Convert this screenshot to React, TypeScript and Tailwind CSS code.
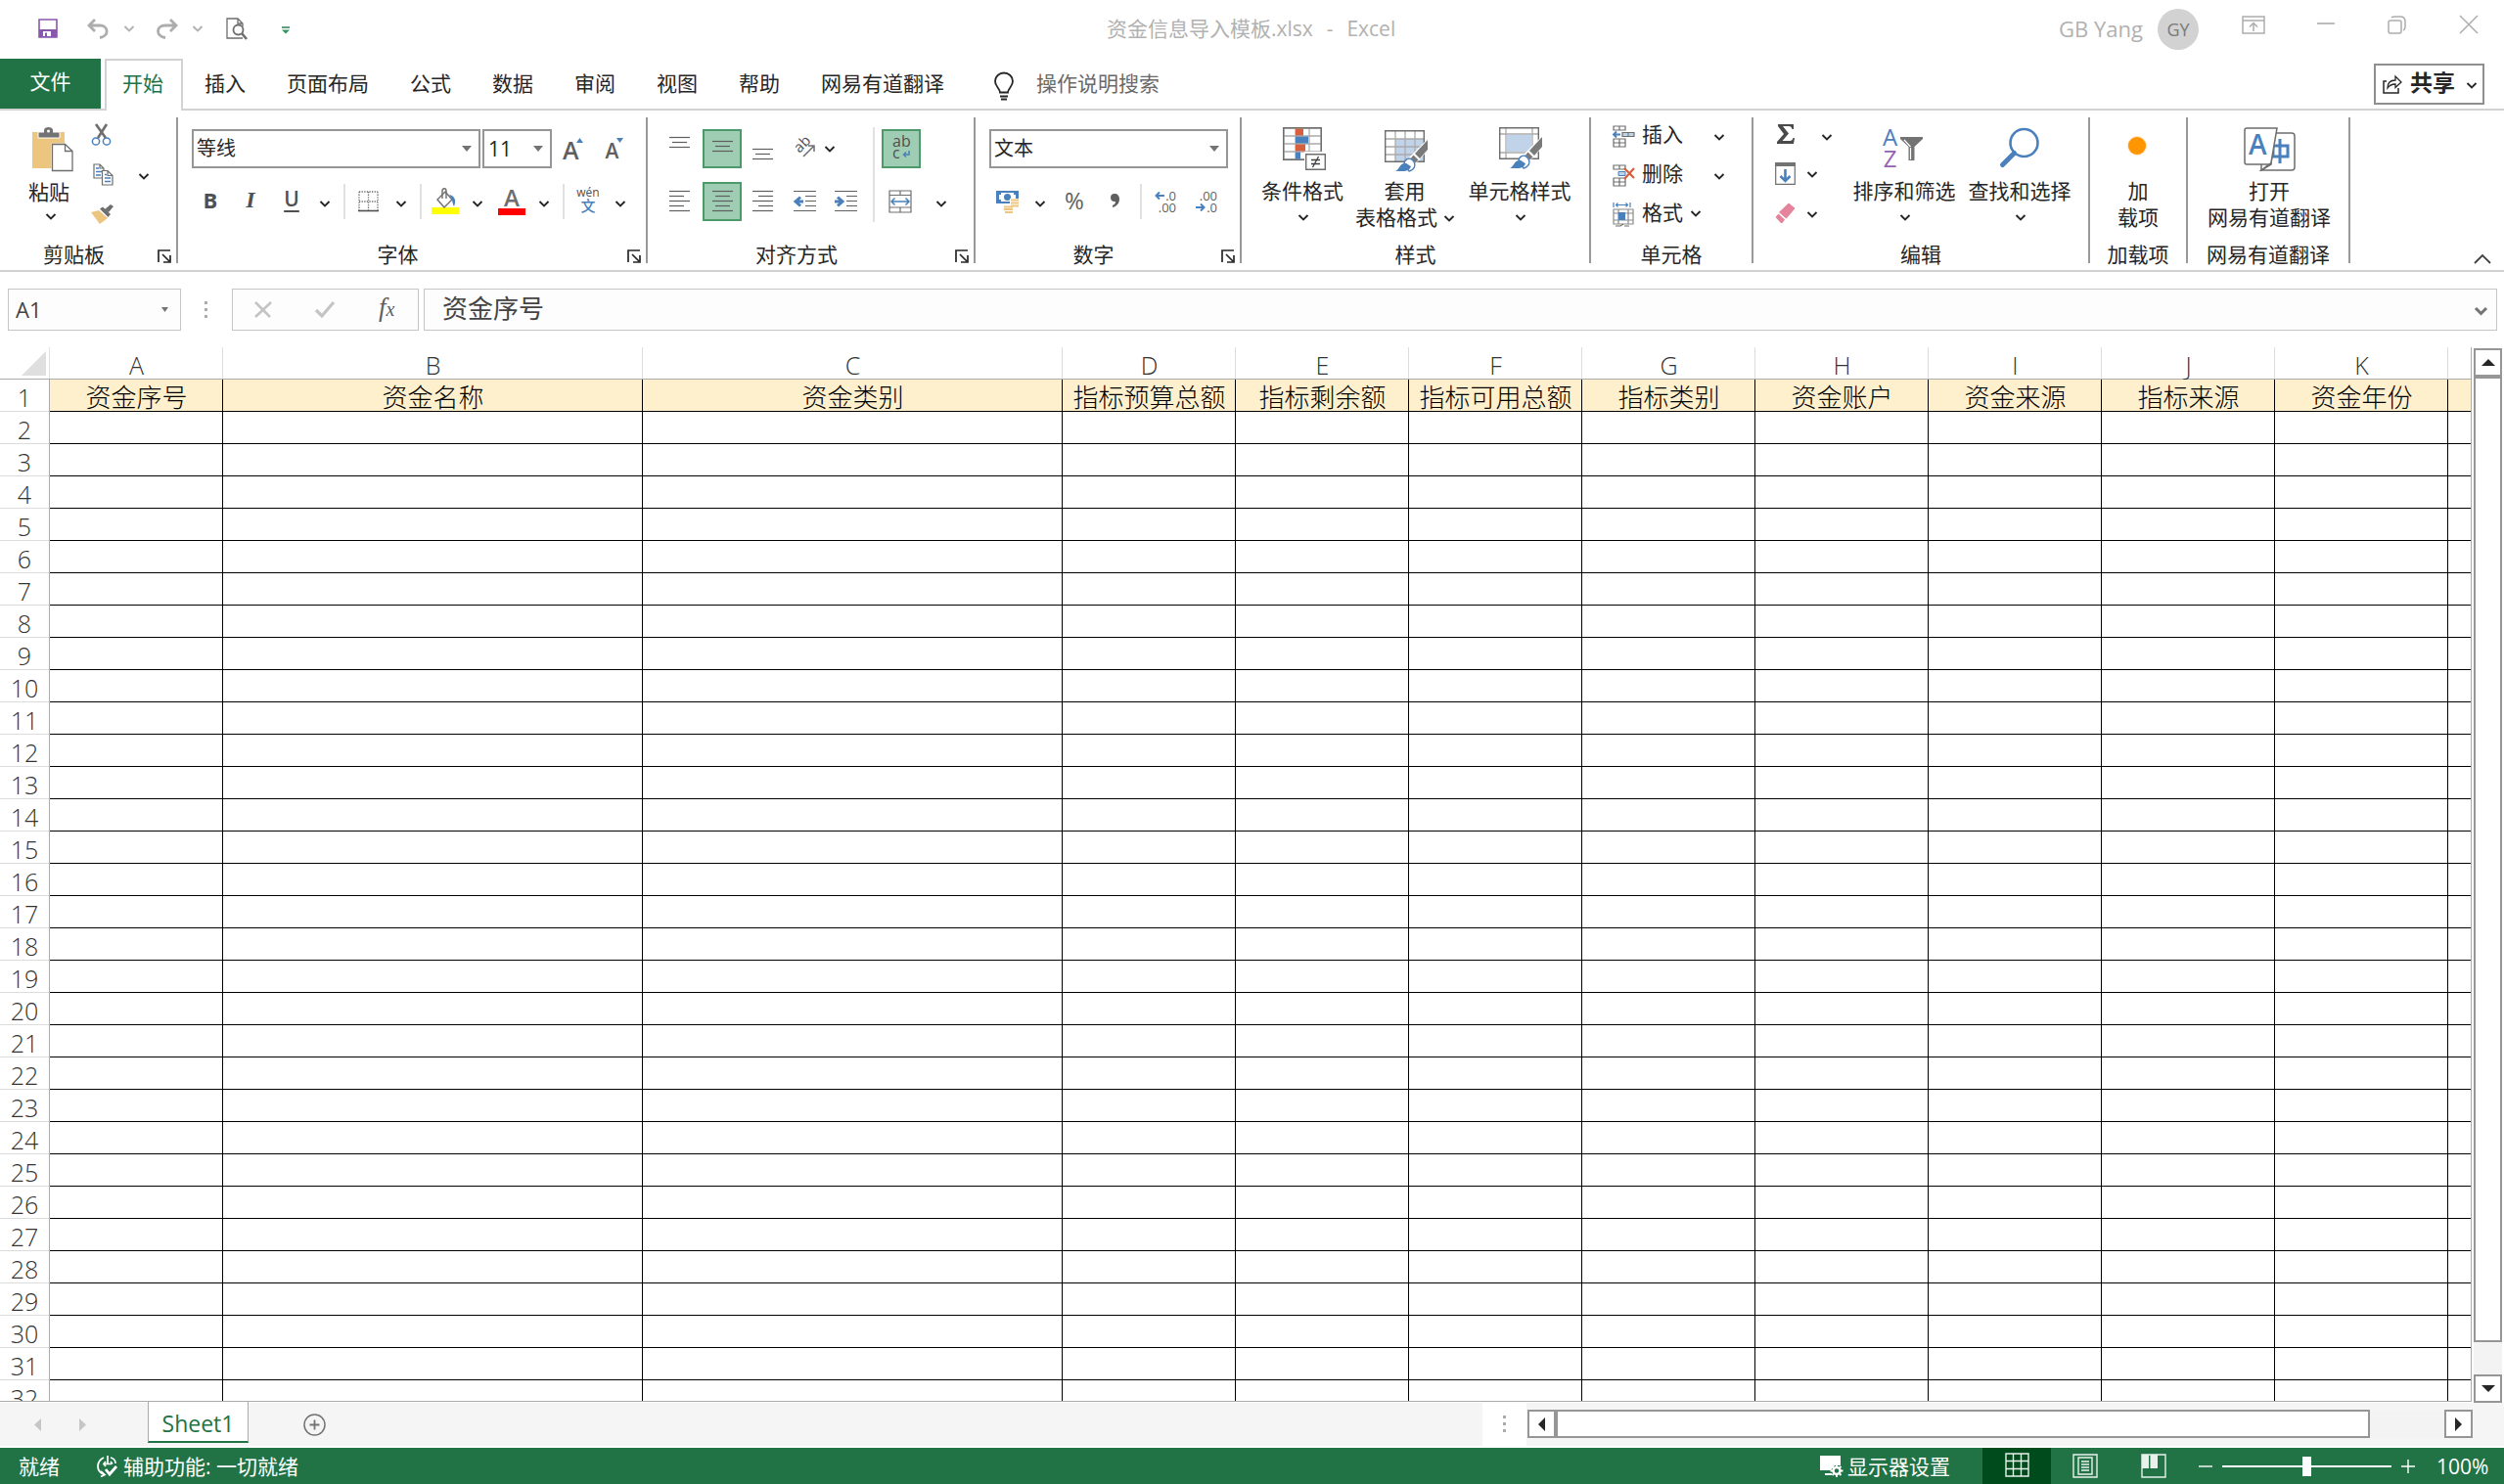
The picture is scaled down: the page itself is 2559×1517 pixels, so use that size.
import type { ReactNode } from 'react';

const COLUMNS = [
  { id: 'A', title: '资金序号', w: 'w-[177px]' },
  { id: 'B', title: '资金名称', w: 'w-[429px]' },
  { id: 'C', title: '资金类别', w: 'w-[429px]' },
  { id: 'D', title: '指标预算总额', w: 'w-[177px]' },
  { id: 'E', title: '指标剩余额', w: 'w-[177px]' },
  { id: 'F', title: '指标可用总额', w: 'w-[177px]' },
  { id: 'G', title: '指标类别', w: 'w-[177px]' },
  { id: 'H', title: '资金账户', w: 'w-[177px]' },
  { id: 'I', title: '资金来源', w: 'w-[177px]' },
  { id: 'J', title: '指标来源', w: 'w-[177px]' },
  { id: 'K', title: '资金年份', w: 'w-[177px]' },
];

const ROWS = Array.from({ length: 32 }, (_, i) => i + 1);

const TABS = ['插入', '页面布局', '公式', '数据', '审阅', '视图', '帮助', '网易有道翻译'];

const BLUE = '#4a80bb';
const GRAY = '#6e6e6e';

function Svg({ w, h, className = '', children }: { w: number; h: number; className?: string; children: ReactNode }) {
  return (
    <svg width={w} height={h} viewBox={`0 0 ${w} ${h}`} fill="none" className={`shrink-0 overflow-visible ${className}`}>
      {children}
    </svg>
  );
}

function Chev({ className = '', color = '#262626' }: { className?: string; color?: string }) {
  return (
    <Svg w={10} h={7} className={className}>
      <path d="M.5 1L5 5.500 9.500 1" stroke={color} strokeWidth="1.900" />
    </Svg>
  );
}

function Caret({ className = '' }: { className?: string }) {
  return (
    <Svg w={10} h={6} className={className}>
      <path d="M0 0h10L5 6z" fill="#737373" />
    </Svg>
  );
}

function Sep({ className = '' }: { className?: string }) {
  return <div className={`h-9 w-0.5 shrink-0 bg-[#e1e1e1] ${className}`} />;
}

function Launcher() {
  return (
    <Svg w={14} h={14} className="mr-[5px] mt-[3px]">
      <path d="M1 13V1h12M5 5l7 7M13 6v7H6" stroke="#262626" strokeWidth="1.7" />
    </Svg>
  );
}

function Group({ width, label, launcher, children }: { width: string; label: string; launcher?: boolean; children: ReactNode }) {
  return (
    <div className={`flex h-[149px] shrink-0 flex-col border-r-2 border-[#999] ${width}`}>
      <div className="h-[132px]">{children}</div>
      <div className="flex h-[17px]">
        <div className={`flex-1 whitespace-nowrap text-center leading-[16px] ${launcher ? 'pr-2.5' : ''}`}>{label}</div>
        {launcher && <Launcher />}
      </div>
    </div>
  );
}

// text lines of the alignment icons, each given as [x, length]
function Lines({ lines, className = '' }: { lines: [number, number][]; className?: string }) {
  return (
    <Svg w={21} h={lines.length * 5 - 3} className={className}>
      {lines.map(([x, len], i) => (
        <path key={i} d={`M${x} ${i * 5 + 0.5}h${len}`} stroke="#5f5f5f" strokeWidth="1.2" />
      ))}
    </Svg>
  );
}

function TitleBar() {
  return (
    <div className="flex h-[60px] items-start text-[#b1b1b1]">
      <div className="flex w-[1131px] shrink-0">
        <Svg w={20} h={20} className="ml-[39px] mt-[19px]">
          <path d="M1 1h18v18H1z" fill="#fff" stroke="#8a57ae" strokeWidth="1.6" />
          <path d="M1 11h18v8H1z" fill="#8a57ae" />
          <path d="M5 13h8v5H5z" fill="#fff" />
          <path d="M7 14.500h2V18H7z" fill="#8a57ae" />
        </Svg>
        <Svg w={23} h={20} className="ml-[30px] mt-5">
          <path d="M8 0L2 6l6 6M2 6h11c9 0 10 11 0 12.500" stroke="#adadad" strokeWidth="2.800" />
        </Svg>
        <Chev className="ml-[15px] mt-[26px]" color="#b1b1b1" />
        <Svg w={23} h={20} className="ml-[22px] mt-5">
          <path d="M15 0l6 6-6 6M21 6H10C0 6 0 17 10 18.500" stroke="#adadad" strokeWidth="2.800" />
        </Svg>
        <Chev className="ml-[15px] mt-[26px]" color="#b1b1b1" />
        <Svg w={23} h={23} className="ml-[24px] mt-[18px]">
          <path d="M17 21H1V1h11l5 5v3M12 1v5h5" stroke={GRAY} strokeWidth="1.3" />
          <circle cx="12.500" cy="12.500" r="5" stroke={GRAY} strokeWidth="1.8" fill="#fff" />
          <path d="M16 16l5 6" stroke={GRAY} strokeWidth="2.6" />
        </Svg>
        <Svg w={8} h={8} className="ml-[34px] mt-[27px]">
          <path d="M0 1h8" stroke="#217346" strokeWidth="1.4" />
          <path d="M0 3.500h8L4 7.500z" fill="#31945f" />
        </Svg>
      </div>
      <div className="mt-[11px] w-[973px] shrink-0 whitespace-pre text-[21px] leading-9 [word-spacing:1.5px]">
        资金信息导入模板.xlsx&nbsp; -&nbsp; Excel
      </div>
      <div className="mt-[11px] w-[101px] text-[22px] leading-9">GB Yang</div>
      <div className="mt-[9px] flex size-[42px] items-center justify-center rounded-full bg-[#d2d2d2] text-[18px] text-[#7a7a7a]">GY</div>
      <Svg w={24} h={19} className="ml-[44px] mt-4">
        <path d="M1 1h22v17H1zM1 5h22M12 16V8M8 11.500L12 7.500l4 4" stroke="#adadad" strokeWidth="1.5" />
      </Svg>
      <Svg w={18} h={2} className="ml-[53px] mt-[23px]">
        <path d="M0 1h18" stroke="#adadad" strokeWidth="1.6" />
      </Svg>
      <Svg w={19} h={19} className="ml-[54px] mt-4">
        <rect x="1" y="5" width="13" height="13" rx="2" stroke="#adadad" strokeWidth="1.5" />
        <path d="M4 2C5 1 6 1 7.500 1H13c3 0 5 2 5 5v5.500c0 2-1 3-2 3.500" stroke="#adadad" strokeWidth="1.500" />
      </Svg>
      <Svg w={18} h={18} className="ml-[55px] mt-4">
        <path d="M0 0l18 18M18 0L0 18" stroke="#adadad" strokeWidth="1.500" />
      </Svg>
    </div>
  );
}

function TabBar() {
  return (
    <div className="flex h-[53px] items-stretch">
      <div className="w-[103px] border-b-2 border-[#d2d2d2]">
        <div className="h-[51px] bg-[#217346] text-center leading-[46px] text-white">文件</div>
      </div>
      <div className="w-1 border-b-2 border-[#d2d2d2]" />
      <div className="w-20 border-x-2 border-t-2 border-[#d2d2d2] pr-0.5 text-center leading-[47px] text-[#217346]">开始</div>
      <div className="flex flex-1 gap-[42px] border-b-2 border-[#d2d2d2] pl-[22px] leading-[51px]">
        {TABS.map(t => (
          <span key={t} className="whitespace-nowrap">{t}</span>
        ))}
        <div className="ml-[9px] flex">
          <Svg w={20} h={29} className="mt-[14px]">
            <path d="M6 20.500c0-4-5-6-5-11.500a9 8.500 0 0 1 18 0c0 5.500-5 7.500-5 11.500zM6 24.500h8M7 27.500h6" stroke="#262626" strokeWidth="1.800" />
          </Svg>
          <span className="ml-[23px] text-[#6a6a6a]">操作说明搜索</span>
        </div>
        <div className="ml-auto mr-5 mt-[5px] flex h-[42px] w-[113px] items-center border-2 border-[#8f8f8f] pl-[7px]">
          <Svg w={20} h={20}>
            <path d="M4 7H1v12h15v-5" stroke="#262626" strokeWidth="1.500" />
            <path d="M5 14c0-6 3-8 8-8V2l6 6-6 5.500V10c-4 0-6 1-8 4z" stroke="#262626" strokeWidth="1.300" />
          </Svg>
          <span className="-mt-1 ml-[8px] text-[23px] font-bold leading-[34px]">共享</span>
          <Chev className="ml-[12px] mt-0.5" />
        </div>
      </div>
    </div>
  );
}

function ClipboardGroup() {
  return (
    <Group width="w-[182px]" label="剪贴板" launcher>
      <div className="flex">
        <div className="ml-[28px] flex w-[46px] flex-col items-center">
          <Svg w={42} h={46} className="ml-1.5 mt-[10px]">
            <path d="M0 5h33v37H0z" fill="#ecc67e" />
            <path d="M6 5h22v6H6z" fill="#737373" stroke="#fff" strokeWidth="1" />
            <path d="M12 6V3c0-4 9-4 9 0v3z" fill="#737373" />
            <circle cx="16.500" cy="4" r="1.500" fill="#fff" />
            <path d="M19.500 16.500h15l7 8v21h-22z" fill="#fff" />
            <path d="M20.500 17.500h13l7.500 7v20H20.500z" fill="#fff" stroke={GRAY} strokeWidth="1.300" />
            <path d="M33.500 17.500v7H41" stroke={GRAY} strokeWidth="1.300" />
          </Svg>
          <span className="-ml-0.5 mt-[5px] whitespace-nowrap leading-[30px]">粘贴</span>
          <Chev className="ml-0.5 mt-[7px]" />
        </div>
        <div className="ml-[19px] flex flex-col">
          <Svg w={22} h={23} className="mt-[6px]">
            <path d="M5 1l10 14M16 1L7 15" stroke={GRAY} strokeWidth="2.600" />
            <circle cx="5" cy="18.500" r="3.600" stroke={BLUE} strokeWidth="1.500" />
            <circle cx="16" cy="18.500" r="3.600" stroke={BLUE} strokeWidth="1.500" />
          </Svg>
          <Svg w={22} h={23} className="ml-[2px] mt-[18px]">
            <path d="M1 1h6l4 4v10H1zM7 1v4h4" fill="#fff" stroke={GRAY} strokeWidth="1.200" />
            <path d="M3 5h3M3 8.500h6M3 12h5" stroke={BLUE} strokeWidth="1.300" />
            <path d="M9.500 7.500H15l5 5V22H9.500zM15 7.500v5h5" fill="#fff" stroke={GRAY} strokeWidth="1.200" />
            <path d="M12 11.500h2M12 15h6M12 18.500h6" stroke={BLUE} strokeWidth="1.300" />
          </Svg>
          <Svg w={24} h={22} className="mt-[18px]">
            <path d="M0 9l8-2 9 8-8 6z" fill="#ecc67e" />
            <path d="M9 5.500L12 3.500l8 7.500-2.500 3z" fill={GRAY} />
            <path d="M14 6l6-5 3 2-5 6z" fill={GRAY} />
          </Svg>
        </div>
        <Chev className="ml-[25px] mt-[57px]" />
      </div>
    </Group>
  );
}

function FontGroup() {
  return (
    <Group width="w-[480px]" label="字体" launcher>
      <div className="mt-3 flex h-10 items-center pl-[14px]">
        <div className="flex h-10 w-[295px] items-center justify-between border-2 border-[#969696] pl-[3px] pr-[7px] text-[20px]">
          <span className="leading-9">等线</span>
          <Caret />
        </div>
        <div className="ml-0.5 flex h-10 w-[71px] items-center justify-between border-2 border-[#969696] pl-1 pr-[7px] text-[21px]">
          <span className="leading-9">11</span>
          <Caret />
        </div>
        <span className="ml-[11px] mt-0.5 font-[Open_Sans] text-[25px] font-semibold leading-9 text-[#5f5f5f]">A</span>
        <Svg w={7} h={5} className="-ml-[3px] mb-[17px]">
          <path d="M0 5l3.500-5L7 5z" fill={BLUE} />
        </Svg>
        <span className="ml-[23px] mt-1 font-[Open_Sans] text-[21px] font-semibold leading-9 text-[#5f5f5f]">A</span>
        <Svg w={7} h={5} className="-ml-0.5 mb-[17px]">
          <path d="M0 0l3.500 5L7 0z" fill={BLUE} />
        </Svg>
      </div>
      <div className="mt-[14px] flex h-10 items-center text-[#505050]">
        <span className="-mt-1 ml-[17px] w-8 text-center text-[22px] font-bold">B</span>
        <span className="-mt-1 ml-[9px] w-8 text-center font-[Liberation_Serif] text-[24px] font-bold italic">I</span>
        <span className="-mt-1 ml-[10px] w-8 text-center text-[21px] font-semibold underline underline-offset-4">U</span>
        <Chev className="ml-[13px] mt-1" />
        <Sep className="ml-[14px]" />
        <Svg w={21} h={22} className="ml-[13px]">
          <path d="M1 1h19M1 11h19M1 1v19M10.500 1v19M20 1v19" stroke={GRAY} strokeWidth="1.300" strokeDasharray="1.300 1.300" />
          <path d="M0 20.500h21" stroke="#505050" strokeWidth="1.600" />
        </Svg>
        <Chev className="ml-[18px] mt-1" />
        <Sep className="ml-[14px]" />
        <Svg w={28} h={28} className="ml-[10px]">
          <path d="M0 20h28v7H0z" fill="#ff0" />
          <path d="M14 4l7 8-8 8-7-8z" fill="#fff" stroke={GRAY} strokeWidth="1.400" />
          <path d="M11 11V3c0-3 4-3 4 0v8" stroke={GRAY} strokeWidth="1.400" />
          <path d="M18 7c5 1 8 5 5 12-2-3-1-7-5-12z" fill={BLUE} />
        </Svg>
        <Chev className="ml-[14px] mt-1" />
        <div className="ml-4 flex w-7 flex-col items-center">
          <span className="h-[21px] font-[Open_Sans] text-[24px] font-semibold leading-[20px] text-[#6e6e6e]">A</span>
          <div className="h-[7px] w-7 bg-[#f00]" />
        </div>
        <Chev className="ml-[14px] mt-1" />
        <Sep className="ml-[14px]" />
        <div className="-mt-0.5 ml-3 flex w-6 flex-col items-center">
          <span className="h-2.5 text-[12px] leading-[8px]">wén</span>
          <span className="h-[14px] text-[15px] font-medium leading-[15px] text-[#4a80bb]">文</span>
        </div>
        <Chev className="ml-4 mt-1" />
      </div>
    </Group>
  );
}

function AlignGroup() {
  const on = 'flex h-10 w-10 items-center justify-center border-2 border-[#4c9a6a] bg-[#9fcdb3]';
  return (
    <Group width="w-[335px]" label="对齐方式" launcher>
      <div className="flex">
        <div className="w-[230px]">
          <div className="mt-3 flex h-10">
            <Lines className="ml-[22px] mt-[8px]" lines={[[0, 21], [3, 15], [0, 21]]} />
            <div className={`ml-[13px] ${on}`}>
              <Lines className="-mt-1" lines={[[0, 21], [3, 15], [0, 21]]} />
            </div>
            <Lines className="ml-[11px] mt-[20px]" lines={[[0, 21], [3, 15], [0, 21]]} />
            <Svg w={22} h={22} className="ml-[22px] mt-[8px]">
              <text x="0" y="0" fontSize="15" fontWeight="500" fill="#505050" fontFamily="Open Sans" transform="translate(5 17) rotate(-45)">ab</text>
              <path d="M9 20L19 10M14 9h6v6" stroke={GRAY} strokeWidth="1.500" />
            </Svg>
            <Chev className="ml-[9px] mt-[17px]" />
          </div>
          <div className="mt-[14px] flex h-10 items-center">
            <Lines className="ml-[22px]" lines={[[0, 21], [0, 15], [0, 21], [0, 15], [0, 21]]} />
            <div className={`ml-[13px] ${on}`}>
              <Lines lines={[[0, 21], [3, 15], [0, 21], [3, 15], [0, 21]]} />
            </div>
            <Lines className="ml-[11px]" lines={[[0, 21], [6, 15], [0, 21], [6, 15], [0, 21]]} />
            <Svg w={23} h={22} className="ml-[21px]">
              <path d="M0 .5h23M12 5.500h11M12 10.500h11M12 15.500h11M0 20.500h23" stroke="#5f5f5f" strokeWidth="1.200" />
              <path d="M10 11H2M7 6.500L2 11l5 4.500" stroke={BLUE} strokeWidth="3" />
            </Svg>
            <Svg w={23} h={22} className="ml-[19px]">
              <path d="M0 .5h23M12 5.500h11M12 10.500h11M12 15.500h11M0 20.500h23" stroke="#5f5f5f" strokeWidth="1.200" />
              <path d="M0 11h8M3 6.500L8 11l-5 4.500" stroke={BLUE} strokeWidth="3" />
            </Svg>
          </div>
        </div>
        <div className="mt-2.5 h-[97px] w-0.5 bg-[#e1e1e1]" />
        <div>
          <div className={`ml-[7px] mt-3 ${on}`}>
            <div className="-mt-1 w-[18px] text-[16px] leading-[12px] text-[#505050]">
              <div>ab</div>
              <div className="flex items-center">
                c
                <Svg w={8} h={8} className="ml-0.5 mt-1">
                  <path d="M7 0v4H2M4 1.500L1.500 4 4 6.500" stroke={BLUE} strokeWidth="1.500" />
                </Svg>
              </div>
            </div>
          </div>
          <div className="mt-[14px] flex h-10 items-center">
            <Svg w={24} h={24} className="ml-[14px]">
              <path d="M1 1h22v22H1zM1 5.500h22M1 18h22M12 1v4.500M12 18v5" stroke={GRAY} strokeWidth="1.200" />
              <path d="M3 12h18M6.500 8.500L3 12l3.500 3.500M17.500 8.500L21 12l-3.500 3.500" stroke={BLUE} strokeWidth="1.500" />
            </Svg>
            <Chev className="ml-[25px] mt-1" />
          </div>
        </div>
      </div>
    </Group>
  );
}

function NumberGroup() {
  return (
    <Group width="w-[272px]" label="数字" launcher>
      <div className="ml-[14px] mt-3 flex h-10 w-[244px] items-center justify-between border-2 border-[#969696] pl-[3px] pr-[7px] text-[20px]">
        <span className="leading-9">文本</span>
        <Caret />
      </div>
      <div className="mt-[14px] flex h-10 items-center text-[#5f5f5f]">
        <Svg w={24} h={23} className="ml-[21px]">
          <path d="M0 0h23v13H0z" fill={BLUE} />
          <path d="M3 4h2V2h13v2h2v5h-2v2H5V9H3z" fill="#fff" />
          <circle cx="11.500" cy="6.500" r="3.500" fill={BLUE} />
          <path d="M14 8h9v10h-5v5H8v-8h6z" fill="#fff" />
          <path d="M15 9.500h8M15 12.500h8M15 15.500h8M8 16.500h9M8 19h9M9 22h8" stroke="#ecc67e" strokeWidth="2" />
        </Svg>
        <Chev className="ml-[16px] mt-1" />
        <span className="-mt-0.5 ml-[19px] w-[22px] text-center text-[24px] leading-8">%</span>
        <Svg w={9} h={14} className="-mt-0.5 ml-[26px]">
          <path d="M0 4a4 4 0 0 1 4-4c3 0 5 2 5 5.500C9 10 6 13 2 14v-2c2-1 3-2 3-4C2 8.500 0 7 0 4z" fill="#5f5f5f" />
        </Svg>
        <Sep className="ml-[21px]" />
        <div className="ml-[13px] w-[22px] text-right text-[13px] leading-[12px]">
          <div className="flex items-center justify-between">
            <Svg w={10} h={8}>
              <path d="M10 4H2M5 .5L1.500 4 5 7.500" stroke={BLUE} strokeWidth="2" />
            </Svg>
            .0
          </div>
          <div>.00</div>
        </div>
        <div className="ml-5 w-[22px] text-right text-[13px] leading-[12px]">
          <div>.00</div>
          <div className="flex items-center justify-between">
            <Svg w={10} h={8}>
              <path d="M0 4h8M5 .5L8.500 4 5 7.500" stroke={BLUE} strokeWidth="2" />
            </Svg>
            .0
          </div>
        </div>
      </div>
    </Group>
  );
}

function Brush() {
  return (
    <g>
      <path d="M44 9v12l-9 10-8 7-6-6z" fill="#fff" />
      <path d="M44 10v10l-8 9-5-5z" fill="#7a7a7a" />
      <path d="M29.500 25.500l5 5-3 3-4.500-5z" fill="#7a7a7a" />
      <path d="M26 29l4.500 5" stroke="#7a7a7a" strokeWidth="1.500" />
      <path d="M20 35c0-5 5-8 9-4 4 5 1 10-4 11z" fill="#fff" stroke={BLUE} strokeWidth="1.400" />
      <path d="M11 42c4-1 4-8 10-8 3 0 3 2 6 3-1 4-5 5-8 5z" fill={BLUE} />
    </g>
  );
}

function BigButton({ width, icon, lines, chev }: { width: string; icon: ReactNode; lines: string[]; chev?: 'below' | 'inline' }) {
  return (
    <div className={`flex shrink-0 flex-col items-center ${width}`}>
      <div className="flex h-[62px] items-start pt-2.5">{icon}</div>
      <span className="whitespace-nowrap leading-[27px]">{lines[0]}</span>
      {lines[1] && (
        <div className="flex items-center whitespace-nowrap leading-[27px]">
          {lines[1]}
          {chev === 'inline' && <Chev className="ml-[7px] mt-0.5" />}
        </div>
      )}
      {chev === 'below' && <Chev className="ml-0.5 mt-2.5" />}
    </div>
  );
}

function StylesGroup() {
  return (
    <Group width="w-[357px]" label="样式">
      <div className="flex">
        <BigButton
          width="ml-[12px] w-[100px]"
          lines={['条件格式']}
          chev="below"
          icon={
            <Svg w={44} h={45} className="ml-1">
              <path d="M1 1h38v32H1zM1 9h38M1 17h38M1 25h38M13 1v32M27 1v32" stroke="#ababab" strokeWidth="1.300" />
              <path d="M.7.700h38.600v32.600H.7z" stroke={GRAY} strokeWidth="1.400" />
              <path d="M13 1.500h8v7h-8zM13 17.500h10v7H13z" fill="#d65f3e" />
              <path d="M13 9.500h13v7H13zM13 25.500h5v7h-5z" fill={BLUE} />
              <path d="M22 25h22v20H22z" fill="#fff" />
              <path d="M23.700 27.700h19.600v15.600H23.700z" stroke={GRAY} strokeWidth="1.400" />
              <path d="M29 33.500h9M29 37.500h9M36.500 30l-6 11" stroke="#404040" strokeWidth="1.300" />
            </Svg>
          }
        />
        <BigButton
          width="ml-[4px] w-[101px]"
          lines={['套用', '表格格式']}
          chev="inline"
          icon={
            <Svg w={46} h={46} className="ml-1 mt-[3px]">
              <path d="M11 9h29v23H11z" fill="#c1d3e8" />
              <path d="M1 9h39M1 17h39M1 25h39M11 1v32M21 1v32M31 1v32" stroke="#ababab" strokeWidth="1.300" />
              <path d="M.7.700h39.600v31.600H.7z" stroke={GRAY} strokeWidth="1.400" />
              <Brush />
            </Svg>
          }
        />
        <BigButton
          width="ml-[14px] w-[106px]"
          lines={['单元格样式']}
          chev="below"
          icon={
            <Svg w={46} h={46} className="ml-1">
              <path d="M1 7h39M1 26h39M7 1v32M34 1v32" stroke="#ababab" strokeWidth="1.300" />
              <path d="M.7.700h39.600v31.600H.7z" stroke={GRAY} strokeWidth="1.400" />
              <path d="M8 8h25v17H8z" fill="#c1d3e8" />
              <Brush />
            </Svg>
          }
        />
      </div>
    </Group>
  );
}

function CellsGroup() {
  return (
    <Group width="w-[166px]" label="单元格">
      <div className="flex h-9 items-center pl-[22px]">
        <Svg w={23} h={23} className="mt-[3px]">
          <path d="M1 1h12v4H1zM7 1v4M1 14h12v8H1zM7 14v8M1 18h12" stroke={GRAY} strokeWidth="1.200" />
          <path d="M10 7.500h12v4H10z" fill="#c1d3e8" stroke={GRAY} strokeWidth="1.200" />
          <path d="M16 7.500v4" stroke={GRAY} />
          <path d="M8 9.500H1M4 6.500l-3 3 3 3" stroke={BLUE} strokeWidth="1.900" />
        </Svg>
        <span className="ml-[7px]">插入</span>
        <Chev className="ml-[32px] mt-1" />
      </div>
      <div className="mt-1 flex h-9 items-center pl-[22px]">
        <Svg w={23} h={23} className="mt-[3px]">
          <path d="M1 1h12v4H1zM7 1v4M1 14h12v8H1zM7 14v8M1 18h12" stroke={GRAY} strokeWidth="1.200" />
          <path d="M6 7.500h7v4H6z" fill="#c1d3e8" stroke={BLUE} />
          <path d="M12 4l10 10M22 4L12 15" stroke="#d65f3e" strokeWidth="2.200" />
        </Svg>
        <span className="ml-[7px]">删除</span>
        <Chev className="ml-[32px] mt-1" />
      </div>
      <div className="mt-1 flex h-9 items-center pl-[22px]">
        <Svg w={23} h={25} className="mt-[2px]">
          <path d="M1 0v5M18 0v5M3 2.500h13M5.500.500l-2 2 2 2M13.500.500l2 2-2 2" stroke={BLUE} strokeWidth="1.200" />
          <path d="M1 7h20v15H1zM1 11h20M1 18h20M6 7v15M16 7v15" stroke="#8a8a8a" strokeWidth="1.200" />
          <path d="M6 10h7v8H6z" fill={BLUE} />
          <path d="M3 24h5l3-2M12 24h5" stroke={GRAY} strokeWidth="1.200" />
        </Svg>
        <span className="ml-[7px]">格式</span>
        <Chev className="ml-2" />
      </div>
    </Group>
  );
}

function EditingGroup() {
  return (
    <Group width="w-[344px]" label="编辑">
      <div className="flex">
        <div className="w-[90px] pl-[22px]">
          <div className="flex h-9 items-center">
            <Svg w={19} h={20} className="ml-0.5 -mt-0.5">
              <path d="M1 0h16v5h-1.500c-.5-2-1.500-3-3.500-3H6l6 7.500L5.500 17H13c2 0 3-1 3.500-3H18l-1 6H0v-2l7-8L1 2z" fill="#4a4a4a" />
            </Svg>
            <Chev className="ml-[27px] mt-1" />
          </div>
          <div className="mt-1 flex h-9 items-center">
            <Svg w={21} h={23} className="-mt-0.5">
              <path d="M.7.700h19.600v21.600H.7z" fill="#fff" stroke={GRAY} strokeWidth="1.200" />
              <path d="M0 0h21v4H0z" fill="#737373" />
              <path d="M10.500 7v12M5.500 14l5 5 5-5" stroke={BLUE} strokeWidth="2.600" />
            </Svg>
            <Chev className="ml-[12px]" />
          </div>
          <div className="mt-1 flex h-9 items-center">
            <Svg w={21} h={21}>
              <path d="M14 0l6 5-8.500 10-7-6z" fill="#e4839b" stroke="#e4839b" />
              <path d="M3.500 10.500l6.500 6-2.500 3.500H6l-5.500-6z" fill="#e4839b" />
            </Svg>
            <Chev className="ml-[12px] mt-0.5" />
          </div>
        </div>
        <BigButton
          width="ml-[11px] w-[106px]"
          lines={['排序和筛选']}
          chev="below"
          icon={
            <div className="-ml-1 flex">
              <div className="w-[17px] text-center font-[Open_Sans] text-[24px] font-medium">
                <div className="h-[21px] leading-[19px] text-[#4a80bb]">A</div>
                <div className="h-[21px] leading-[21px] text-[#9561b5]">Z</div>
              </div>
              <Svg w={23} h={25} className="ml-0.5 mt-[10px]">
                <path d="M0 0h23v2l-8.500 8v14h-6V10L0 2z" fill="#737373" />
                <path d="M10.500 11v12M4 3l6.500 7" stroke="#fff" strokeWidth="1.200" />
              </Svg>
            </div>
          }
        />
        <BigButton
          width="ml-[12px] w-[106px]"
          lines={['查找和选择']}
          chev="below"
          icon={
            <Svg w={42} h={42}>
              <circle cx="25.500" cy="16" r="14" stroke={BLUE} strokeWidth="2.600" />
              <path d="M15.500 26.500L3.500 38.500" stroke={BLUE} strokeWidth="5" strokeLinecap="round" />
            </Svg>
          }
        />
      </div>
    </Group>
  );
}

function Ribbon() {
  return (
    <div className="flex h-[165px] border-b-2 border-[#d2d2d2] pt-[7px]">
      <ClipboardGroup />
      <FontGroup />
      <AlignGroup />
      <NumberGroup />
      <StylesGroup />
      <CellsGroup />
      <EditingGroup />
      <Group width="w-[100px]" label="加载项">
        <BigButton
          width="w-[98px]"
          lines={['加', '载项']}
          icon={<div className="mr-0.5 mt-[10px] size-[18px] rounded-full bg-[#ff9500] shadow-[0_0_2px_#ffb04a]" />}
        />
      </Group>
      <Group width="w-[166px]" label="网易有道翻译">
        <BigButton
          width="w-[166px]"
          lines={['打开', '网易有道翻译']}
          icon={
            <Svg w={53} h={45}>
              <path d="M31 6h18a3 3 0 0 1 3 3v32a3 3 0 0 1-3 3H18l10-6z" fill="#fff" stroke={GRAY} strokeWidth="1.500" />
              <path d="M37 12v25M30 19h15v11H30z" stroke={BLUE} strokeWidth="3" />
              <path d="M3 1h31l-6 35c0 1-1 2-2 2H3a2 2 0 0 1-2-2V3a2 2 0 0 1 2-2zM18 38v6l9-7" fill="#fff" stroke={GRAY} strokeWidth="1.500" />
              <text x="5" y="28" fontSize="28" fontWeight="600" fill={BLUE} fontFamily="Open Sans">A</text>
            </Svg>
          }
        />
      </Group>
      <Svg w={18} h={10} className="ml-auto mr-[13px] mt-[140px]">
        <path d="M1 9l8-8 8 8" stroke="#404040" strokeWidth="1.800" />
      </Svg>
    </div>
  );
}

function Dots() {
  return (
    <div className="flex flex-col gap-1">
      <div className="size-[3px] bg-[#ababab]" />
      <div className="size-[3px] bg-[#ababab]" />
      <div className="size-[3px] bg-[#ababab]" />
    </div>
  );
}

function FormulaBar() {
  return (
    <div className="flex h-[77px] pl-2 pt-[17px] text-[#444]">
      <div className="flex h-[43px] w-[177px] items-center justify-between border border-[#c6c6c6] bg-[#fdfdfd] pl-[7px] pr-3 text-[22px]">
        A1
        <Svg w={7} h={5}>
          <path d="M0 0h7L3.500 5z" fill="#737373" />
        </Svg>
      </div>
      <div className="ml-6 mt-[13px] w-7">
        <Dots />
      </div>
      <div className="flex h-[43px] w-[191px] items-center border border-[#c6c6c6] bg-[#fdfdfd]">
        <Svg w={18} h={17} className="ml-[22px]">
          <path d="M1 1l15 15M17 1L1 16" stroke="#c4c4c4" strokeWidth="2.600" />
        </Svg>
        <Svg w={20} h={17} className="ml-[44px]">
          <path d="M1 9l6 6L19 1" stroke="#c4c4c4" strokeWidth="3.200" />
        </Svg>
        <span className="-mt-1 ml-[45px] font-[Liberation_Serif] text-[27px] italic leading-8 text-[#5f5f5f]">
          f<span className="text-[20px]">x</span>
        </span>
      </div>
      <div className="ml-[5px] flex h-[43px] w-[2119px] items-center justify-between border border-[#c6c6c6] bg-[#fdfdfd] pl-[18px] pr-[9px]">
        <span className="-mt-1 text-[26px] leading-9">资金序号</span>
        <Svg w={13} h={9} className="mt-1">
          <path d="M1 1l5.500 5.500L12 1" stroke="#737373" strokeWidth="3" />
        </Svg>
      </div>
    </div>
  );
}

function Grid() {
  return (
    <div className="h-[1078px] w-[2526px] overflow-hidden border-b border-r border-[#ababab]">
      <div className="flex h-[33px] border-b border-[#ababab] text-[25px] font-light leading-[36px] text-[#333]">
        <div className="flex w-[51px] shrink-0 items-end justify-end border-r border-[#e1e1e1] pb-[3px] pr-[3px]">
          <Svg w={25} h={25}>
            <path d="M25 0v25H0z" fill="#dfdfdf" />
          </Svg>
        </div>
        {COLUMNS.map(c => (
          <div key={c.id} className={`shrink-0 border-r border-[#dcdcdc] pl-px text-center ${c.w}`}>{c.id}</div>
        ))}
      </div>
      {ROWS.map(n => (
        <div key={n} className="flex h-[33px]">
          <div className="w-[51px] shrink-0 border-b border-r border-b-[#dcdcdc] border-r-[#ababab] text-center text-[25px] font-light leading-[37px] text-[#333]">
            {n}
          </div>
          {COLUMNS.map(c => (
            <div
              key={c.id}
              className={`shrink-0 whitespace-nowrap border-b border-r border-black pl-px text-center text-[26px] font-light leading-[37px] text-black ${c.w} ${n === 1 ? 'bg-[#fff0cd]' : ''}`}
            >
              {n === 1 ? c.title : ''}
            </div>
          ))}
          <div className={`flex-1 border-b border-black ${n === 1 ? 'bg-[#fff0cd]' : ''}`} />
        </div>
      ))}
    </div>
  );
}

function VScroll() {
  return (
    <div className="ml-0.5 mt-px flex h-[1078px] w-[29px] flex-col bg-[#f3f3f3]">
      <div className="flex h-[29px] items-center justify-center border-2 border-[#969696] bg-white">
        <Svg w={14} h={7}>
          <path d="M7 0l7 7H0z" fill="#262626" />
        </Svg>
      </div>
      <div className="h-[987px] border-2 border-[#969696] bg-white" />
      <div className="mt-auto flex h-[29px] items-center justify-center border-2 border-[#969696] bg-white">
        <Svg w={14} h={7}>
          <path d="M7 7l7-7H0z" fill="#262626" />
        </Svg>
      </div>
    </div>
  );
}

function SheetBar() {
  return (
    <div className="flex h-[46px] border-b-2 border-white bg-[#f5f5f5]">
      <Svg w={7} h={13} className="ml-[35px] mt-4">
        <path d="M7 0v13L0 6.500z" fill="#c6c6c6" />
      </Svg>
      <Svg w={7} h={13} className="ml-[39px] mt-4">
        <path d="M0 0v13l7-6.500z" fill="#c6c6c6" />
      </Svg>
      {/* the active tab covers the line above it */}
      <div className="relative -top-px ml-[63px] h-[42px] w-[103px] border-x border-b-2 border-x-[#ababab] border-b-[#217346] bg-white text-center text-[23px] font-medium leading-[44px] text-[#217346]">
        Sheet1
      </div>
      <Svg w={23} h={23} className="ml-[56px] mt-[11px]">
        <circle cx="11.500" cy="11.500" r="10.500" stroke="#737373" strokeWidth="1.500" />
        <path d="M11.500 6.500v10M6.500 11.500h10" stroke="#737373" strokeWidth="1.800" />
      </Svg>
      <div className="ml-auto flex w-[45px] justify-center bg-white pt-[13px]">
        <Dots />
      </div>
      <div className="ml-px mr-[32px] mt-[7px] flex h-[29px] w-[966px] bg-[#f3f3f3]">
        <div className="flex w-[29px] items-center justify-center border-2 border-[#969696] bg-white">
          <Svg w={7} h={14}>
            <path d="M7 0v14L0 7z" fill="#262626" />
          </Svg>
        </div>
        <div className="w-[832px] border-2 border-[#969696] bg-white" />
        <div className="ml-auto flex w-[29px] items-center justify-center border-2 border-[#969696] bg-white">
          <Svg w={7} h={14}>
            <path d="M0 0v14l7-7z" fill="#262626" />
          </Svg>
        </div>
      </div>
    </div>
  );
}

function StatusBar() {
  return (
    <div className="flex h-[38px] items-center border-b border-[#bfbfbf] bg-[#217346] leading-[34px] text-white">
      <span className="ml-[19px]">就绪</span>
      <Svg w={22} h={22} className="ml-[38px]">
        <path d="M7 2C-1 6-1 16 7 19M4 16l4 3.500-4 2" stroke="#fff" strokeWidth="1.800" />
        <path d="M11 0v8M14 2c4 1 5 4 5 6M7 8.500h8M9 6l-2 2.500L9 11M14 6l2 2.500" stroke="#fff" strokeWidth="1.700" />
        <path d="M9 14l4 5 7-8" stroke="#fff" strokeWidth="2.800" />
      </Svg>
      <span className="ml-[5px]">辅助功能: 一切就绪</span>
      <div className="ml-auto flex h-full items-center">
        <Svg w={24} h={22}>
          <path d="M0 0h21v10h-6l-4 5H0z" fill="#fff" />
          <path d="M5 19h7" stroke="#fff" strokeWidth="2" />
          <circle cx="17" cy="15.500" r="3.500" stroke="#fff" strokeWidth="2.500" />
          <path d="M17 9v2.500M17 19.500V22M10.500 15.500H13M21 15.500h2.500M12.500 11l2 2M19.500 18l2 2M21.500 11l-2 2M14.500 18l-2 2" stroke="#fff" strokeWidth="1.800" />
        </Svg>
        <span className="ml-1 w-[138px]">显示器设置</span>
        <div className="flex h-full w-[70px] items-center justify-center bg-[#004b1c]">
          <Svg w={25} h={25} className="-mt-0.5">
            <path d="M1 1h23v23H1zM1 8.500h23M1 16.500h23M8.500 1v23M16.500 1v23" stroke="#e9f1ec" strokeWidth="1.400" />
          </Svg>
        </div>
        <Svg w={26} h={25} className="ml-[22px]">
          <path d="M1 1h24v23H1zM6 4h14v17H6zM9 8h8M9 11h8M9 14h8M9 17h8" stroke="#e9f1ec" strokeWidth="1.400" />
        </Svg>
        <Svg w={26} h={25} className="ml-[44px]">
          <path d="M1 1h24v23H1z" stroke="#e9f1ec" strokeWidth="1.400" />
          <path d="M1 1h7v14H1zM9.500 1H17v14H9.500z" fill="#e9f1ec" />
        </Svg>
        <Svg w={14} h={2} className="ml-[33px]">
          <path d="M0 1h14" stroke="#fff" strokeWidth="1.400" />
        </Svg>
        <Svg w={173} h={20} className="ml-2.5">
          <path d="M0 10h173" stroke="#fff" strokeWidth="2" />
          <path d="M82 0h9v20h-9z" fill="#fff" />
        </Svg>
        <Svg w={14} h={14} className="ml-2.5">
          <path d="M0 7h14M7 0v14" stroke="#fff" strokeWidth="1.400" />
        </Svg>
        <span className="ml-[22px] w-[69px]">100%</span>
      </div>
    </div>
  );
}

export default function App() {
  return (
    <div className="h-[1517px] w-[2559px] overflow-hidden bg-white font-['Open_Sans','Noto_Sans_CJK_SC',sans-serif] text-[21px] text-[#262626]">
      <TitleBar />
      <TabBar />
      <Ribbon />
      <FormulaBar />
      <div className="flex">
        <Grid />
        <VScroll />
      </div>
      <SheetBar />
      <StatusBar />
    </div>
  );
}
